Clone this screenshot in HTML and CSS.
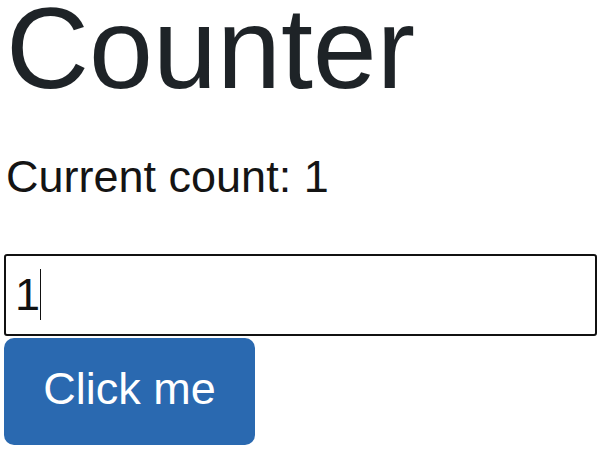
FILE: index.html
```html
<!DOCTYPE html>
<html lang="en">
<head>
<meta charset="utf-8">
<title>Counter</title>
<link rel="stylesheet" href="styles.css">
</head>
<body>
<main class="page">
  <h1 class="title">Counter</h1>
  <p class="count">Current count: 1</p>
  <div class="field" role="textbox">1<span class="caret"></span></div>
  <button class="btn" type="button">Click me</button>
</main>
</body>
</html>
```
FILE: styles.css
```css
html, body {
  margin: 0;
  padding: 0;
  background: #ffffff;
}
body {
  font-family: "Liberation Sans", Arial, sans-serif;
  color: #212529;
}
.page {
  padding: 0 3px 0 4px;
  display: flex;
  flex-direction: column;
  align-items: flex-start;
}
.title {
  margin: 0;
  padding-left: 2px;
  font-size: 115px;
  font-weight: 400;
  line-height: 0.835;
  color: #1e2327;
}
.count {
  margin: 47px 0 0 0;
  padding-left: 2px;
  font-size: 45px;
  line-height: 1.5;
  color: #141414;
}
.field {
  box-sizing: border-box;
  align-self: stretch;
  margin-top: 43px;
  height: 82px;
  border: 2px solid #111;
  border-radius: 3px;
  padding: 0 9px;
  font-size: 45px;
  line-height: 78px;
  color: #111;
  display: flex;
  align-items: center;
}
.caret {
  display: inline-block;
  width: 1px;
  height: 51px;
  background: #111;
  margin-left: 0;
}
.btn {
  margin-top: 2px;
  width: 251px;
  height: 107px;
  padding: 0 0 4px 0;
  border: none;
  border-radius: 10px;
  background: #2a69b0;
  color: #ffffff;
  font-family: "Liberation Sans", Arial, sans-serif;
  font-size: 45px;
  line-height: 1.5;
}
```
